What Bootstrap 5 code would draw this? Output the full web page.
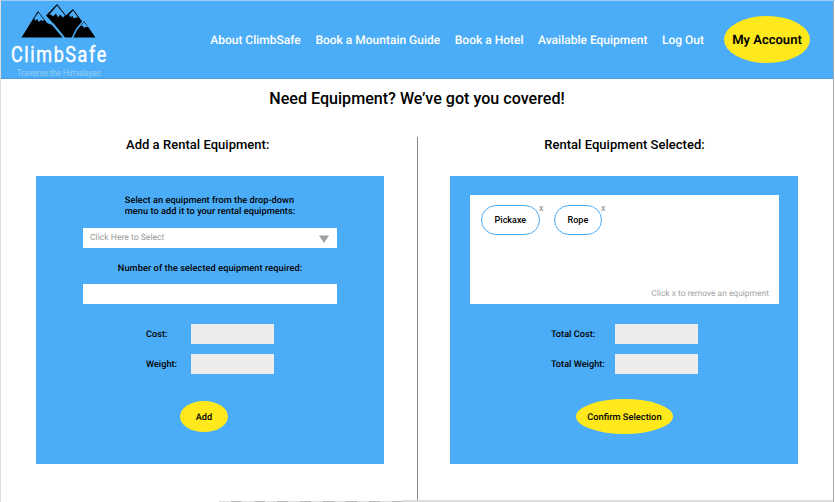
<!DOCTYPE html>
<html lang="en">
<head>
<meta charset="utf-8">
<title>ClimbSafe – Equipment</title>
<link href="https://cdn.jsdelivr.net/npm/bootstrap@5.3.0/dist/css/bootstrap.min.css" rel="stylesheet">
<style>
:root{--sky:#4badf7;--sun:#ffe81c}
body{font-family:Roboto,"Liberation Sans",sans-serif;font-weight:500;color:#000;font-size:9px;line-height:11px;background:#fff}
.frame{width:835px;height:502px;border-left:1px solid #ddd;border-top:1px solid #9dcdf2}
.frame-body{width:833px;height:501px;border-right:1px solid #aaa}
.topbar{height:78px;flex:none;background:var(--sky);border-bottom:1px solid #4a9de0}
.topbar .nav-link{color:#fff;font-size:12px;line-height:16px;padding:0;white-space:nowrap;text-rendering:geometricPrecision}
.links{gap:14.600px;padding-right:20px}
.oval{background:var(--sun);border-radius:50%;border:0;color:#000;font-weight:500;padding:1px 0 0;white-space:nowrap;line-height:13px;text-rendering:geometricPrecision}
.oval-account{width:86px;height:47px;font-size:13px;font-weight:600;margin-right:23px}
.oval-add{width:48px;height:31px;font-size:9.200px;margin:27px 12px 0 0}
.oval-confirm{width:97px;height:35px;font-size:9.300px;margin-top:25px}
.page-title{font-size:16.100px;line-height:20px;font-weight:500;padding-top:10px}
.columns{padding-top:28px}
.column-title{font-size:13px;line-height:16px;font-weight:500;letter-spacing:.03px}
.add-title{padding-left:125px}
.selected-title{padding-right:2px}
.half{width:416px}
.half-right{width:416px;height:363px;border-left:1px solid #888}
.panel{width:348px;height:288px;background:var(--sky)}
.panel-left{margin:23px 0 0 35px}
.panel-right{margin:23px 0 0 32.400px}
.prompt{margin-top:19px;font-size:9.200px;letter-spacing:.04px;text-rendering:geometricPrecision}
.count-label{margin-top:15px;font-size:9.200px;letter-spacing:.08px;text-rendering:geometricPrecision}
.field{width:254px;height:20px;background:#fff;border:0;border-radius:0}
.picker{margin-top:11px;padding:1px 8px 0 7px}
.count{margin-top:10px}
.muted{color:#999;font-weight:400;font-size:8.600px;text-rendering:geometricPrecision}
.hint{color:#a3a3a3;font-size:8.450px}
.total{margin-top:20px;text-rendering:geometricPrecision;font-size:9.200px}
.total + .total{margin-top:10px}
.caption-sm{width:45px;padding-top:1px}
.caption-lg{width:64px;padding-top:1px;white-space:nowrap}
.readout{width:83px;height:20px;background:#ececec}
.basket{width:309px;height:109px;background:#fff;margin-top:19px;padding:10px 10px 4px 11px}
.basket-items{gap:14px}
.pill{border:1px solid var(--sky);border-radius:15px;height:30px}
.pill-wide{width:59px}
.pill-short{width:48px}
.remove{top:-3px;right:-4.500px;line-height:10px;color:#888;font-weight:400}
.dashes{width:184px;height:1px;margin-left:218px;background:repeating-linear-gradient(90deg,#ddd 0 12px,#bbb 12px 23px)}
.baseline{height:2px;background:#ddd}
</style>
</head>
<body>
<div class="frame overflow-hidden">
<div class="frame-body d-flex flex-column">
<header class="topbar d-flex align-items-center">
  <a href="#" class="d-block me-auto" aria-label="ClimbSafe">
  <svg class="d-block" width="114" height="77" viewBox="1 1 114 77">
    <path d="M21.500 37.500L38 11l9 12 5 2 10.500 12.500zM46 15.500L57 4l9 11.500L73 9l11 15-10 13.500H64L53 24zM73 37.500L84 21l11.500 16.500z"/>
    <path d="M34.500 18L38.500 12.500l5.500 7.500-1 1-2-1-2 2-2-3-2 2zM49 15L57 5.500l8 10-2 2-3-3-2 3-2-4-3 3-2-2zM69 15l4-4.500 5 7-2 0-2 1-2-3-1 2zM81 26l3-4 4 5-2 0-2 1-1-2z" fill="#4badf7"/>
    <path d="M45 15l9 10 10.500 13M72 38.500l4.500-9 6.500-8" fill="none" stroke="#4badf7" stroke-width="1.500"/>
    <path d="M46.500 15.500L53.500 23" fill="none" stroke="#000"/>
    <text transform="translate(11 62) scale(.8 1)" font-family="Roboto, sans-serif" font-size="22.500" font-weight="400" fill="#fff" stroke="#fff" stroke-width=".5" textLength="119" lengthAdjust="spacing">ClimbSafe</text>
    <text x="17" y="75.500" font-family="Roboto, sans-serif" font-size="8.500" font-weight="400" fill="#95cdf9" textLength="84" lengthAdjust="spacing">Traverse the Himalayas</text>
  </svg></a>
  <nav class="nav links flex-nowrap">
    <a class="nav-link" href="#">About ClimbSafe</a>
    <a class="nav-link" href="#">Book a Mountain Guide</a>
    <a class="nav-link" href="#">Book a Hotel</a>
    <a class="nav-link" href="#">Available Equipment</a>
    <a class="nav-link" href="#">Log Out</a>
  </nav>
  <button class="oval oval-account">My Account</button>
</header>
<h1 class="page-title text-center mb-0">Need Equipment? We’ve got you covered!</h1>
<main class="columns d-flex">
  <section class="half">
    <h2 class="column-title add-title mb-0">Add a Rental Equipment:</h2>
    <form class="panel panel-left d-flex flex-column align-items-center">
      <label class="prompt">Select an equipment from the drop-down<br>menu to add it to your rental equipments:</label>
      <div class="field picker d-flex align-items-center justify-content-between">
        <span class="muted">Click Here to Select</span>
        <svg width="10" height="8"><path d="M0 .500h10L5 8z" fill="#a0a0a0"/></svg>
      </div>
      <label class="count-label" for="count">Number of the selected equipment required:</label>
      <input class="field count" id="count">
      <div class="total d-flex align-items-center"><span class="caption-sm">Cost:</span><span class="readout"></span></div>
      <div class="total d-flex align-items-center"><span class="caption-sm">Weight:</span><span class="readout"></span></div>
      <button type="button" class="oval oval-add">Add</button>
    </form>
  </section>
  <section class="half-right">
    <h2 class="column-title selected-title mb-0 text-center">Rental Equipment Selected:</h2>
    <div class="panel panel-right d-flex flex-column align-items-center">
      <div class="basket d-flex flex-column justify-content-between">
        <div class="basket-items d-flex">
          <span class="pill pill-wide position-relative d-flex align-items-center justify-content-center">Pickaxe<span class="remove position-absolute">x</span></span>
          <span class="pill pill-short position-relative d-flex align-items-center justify-content-center">Rope<span class="remove position-absolute">x</span></span>
        </div>
        <span class="muted hint text-end">Click x to remove an equipment</span>
      </div>
      <div class="total d-flex align-items-center"><span class="caption-lg">Total Cost:</span><span class="readout"></span></div>
      <div class="total d-flex align-items-center"><span class="caption-lg">Total Weight:</span><span class="readout"></span></div>
      <button type="button" class="oval oval-confirm">Confirm Selection</button>
    </div>
  </section>
</main>
<footer class="d-flex align-items-end mt-auto"><span class="dashes"></span><span class="baseline flex-fill"></span></footer>
</div>
</div>
<script src="https://cdn.jsdelivr.net/npm/bootstrap@5.3.0/dist/js/bootstrap.bundle.min.js"></script>
</body>
</html>
